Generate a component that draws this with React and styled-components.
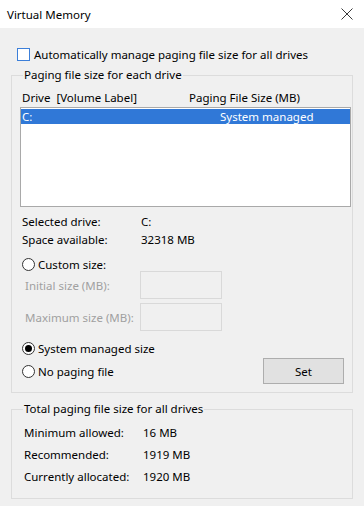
import styled, { createGlobalStyle } from "styled-components";

const Global = createGlobalStyle`
  html, body {
    margin: 0;
    padding: 0;
    background: #f0f0f0;
  }
  body {
    font-family: "Segoe UI", "Noto Sans", "Open Sans", sans-serif;
    font-size: 11.5px;
    color: #000;
  }
  * { box-sizing: border-box; }
`;

const Window = styled.div`
  width: 364px;
  height: 506px;
  background: #f0f0f0;
  overflow: hidden;
`;

const TitleBar = styled.div`
  height: 28px;
  background: #fff;
  display: flex;
  align-items: center;
  justify-content: space-between;
  padding: 0 11px 0 7px;
  font-size: 11.5px;
`;

const Body = styled.div`
  padding: 18px 11px 0 11px;
`;

const CheckRow = styled.label`
  height: 16px;
  display: flex;
  align-items: center;
  gap: 4px;
  padding-left: 6px;
`;

const CheckBox = styled.span`
  width: 13px;
  height: 13px;
  border: 1px solid #3c7fd9;
  background: #fff;
`;

const Group = styled.fieldset`
  margin: ${(p) => p.$top}px 0 0 0;
  padding: 0 1px ${(p) => p.$bottom}px 8px;
  border: 1px solid #dcdcdc;
  min-width: 0;
`;

const Legend = styled.legend`
  padding: 0 1px;
  margin-left: 3px;
  line-height: 16px;
  height: 16px;
`;

const Header = styled.div`
  margin-top: 6px;
  height: 16px;
  display: grid;
  grid-template-columns: 167px 1fr;
  align-items: center;
  padding-left: 2px;
`;

const ListBox = styled.div`
  margin-top: 2px;
  height: 100px;
  border: 1px solid #a9a9a9;
  background: #fff;
  padding: 1px 0 0 0;
`;

const ListRow = styled.div`
  height: 15px;
  display: grid;
  grid-template-columns: 198px 1fr;
  align-items: center;
  padding-left: 1px;
  background: ${(p) => (p.$selected ? "#3078d7" : "transparent")};
  color: ${(p) => (p.$selected ? "#fff" : "#000")};
`;

const InfoGrid = styled.div`
  margin-top: ${(p) => p.$top}px;
  display: grid;
  grid-template-columns: ${(p) => p.$label}px 1fr;
  grid-auto-rows: ${(p) => p.$row}px;
  align-items: center;
  padding-left: ${(p) => p.$indent}px;
`;

const RadioRow = styled.div`
  height: ${(p) => p.$h || 14}px;
  margin-top: ${(p) => p.$top || 0}px;
  display: flex;
  align-items: center;
  gap: 3px;
  padding-left: 2px;
`;

const Radio = styled.span`
  width: 13px;
  height: 13px;
  border-radius: 50%;
  border: 1px solid #333;
  background: #fff;
  display: flex;
  align-items: center;
  justify-content: center;
  &::after {
    content: "";
    width: 7px;
    height: 7px;
    border-radius: 50%;
    background: ${(p) => (p.$checked ? "#000" : "transparent")};
  }
`;

const SizeRow = styled.div`
  height: 28px;
  margin-top: ${(p) => p.$top || 0}px;
  display: grid;
  grid-template-columns: 115px 82px;
  align-items: center;
  padding-left: 5px;
  color: #a0a0a0;
`;

const SizeInput = styled.div`
  height: 28px;
  border: 1px solid #d9d9d9;
  background: #f0f0f0;
`;

const BottomRow = styled.div`
  height: 26px;
  margin-top: 2px;
  display: flex;
  align-items: center;
  justify-content: space-between;
  padding-right: 7px;
`;

const Button = styled.div`
  width: 81px;
  height: 26px;
  background: #e1e1e1;
  border: 1px solid #adadad;
  display: flex;
  align-items: center;
  justify-content: center;
`;

const CloseIcon = () => (
  <svg width="12" height="12" viewBox="0 0 12 12">
    <path d="M0.5 0.5 L11.5 11.5 M11.5 0.5 L0.5 11.5" stroke="#222" strokeWidth="0.9" fill="none" />
  </svg>
);

export default function App() {
  return (
    <Window>
      <Global />
      <TitleBar>
        <span>Virtual Memory</span>
        <CloseIcon />
      </TitleBar>
      <Body>
        <CheckRow>
          <CheckBox />
          Automatically manage paging file size for all drives
        </CheckRow>

        <Group $top={5} $bottom={8}>
          <Legend>Paging file size for each drive</Legend>
          <Header>
            <span>Drive&nbsp;&nbsp;[Volume Label]</span>
            <span>Paging File Size (MB)</span>
          </Header>
          <ListBox>
            <ListRow $selected>
              <span>C:</span>
              <span>System managed</span>
            </ListRow>
          </ListBox>
          <InfoGrid $top={5} $label={119} $row={18} $indent={2}>
            <span>Selected drive:</span>
            <span>C:</span>
            <span>Space available:</span>
            <span>32318 MB</span>
          </InfoGrid>
          <RadioRow $top={9}>
            <Radio />
            Custom size:
          </RadioRow>
          <SizeRow>
            <span>Initial size (MB):</span>
            <SizeInput />
          </SizeRow>
          <SizeRow $top={4}>
            <span>Maximum size (MB):</span>
            <SizeInput />
          </SizeRow>
          <RadioRow $top={9} $h={16}>
            <Radio $checked />
            System managed size
          </RadioRow>
          <BottomRow>
            <RadioRow>
              <Radio />
              No paging file
            </RadioRow>
            <Button>Set</Button>
          </BottomRow>
        </Group>

        <Group $top={8} $bottom={11}>
          <Legend>Total paging file size for all drives</Legend>
          <InfoGrid $top={4} $label={119} $row={22} $indent={4}>
            <span>Minimum allowed:</span>
            <span>16 MB</span>
            <span>Recommended:</span>
            <span>1919 MB</span>
            <span>Currently allocated:</span>
            <span>1920 MB</span>
          </InfoGrid>
        </Group>
      </Body>
    </Window>
  );
}
